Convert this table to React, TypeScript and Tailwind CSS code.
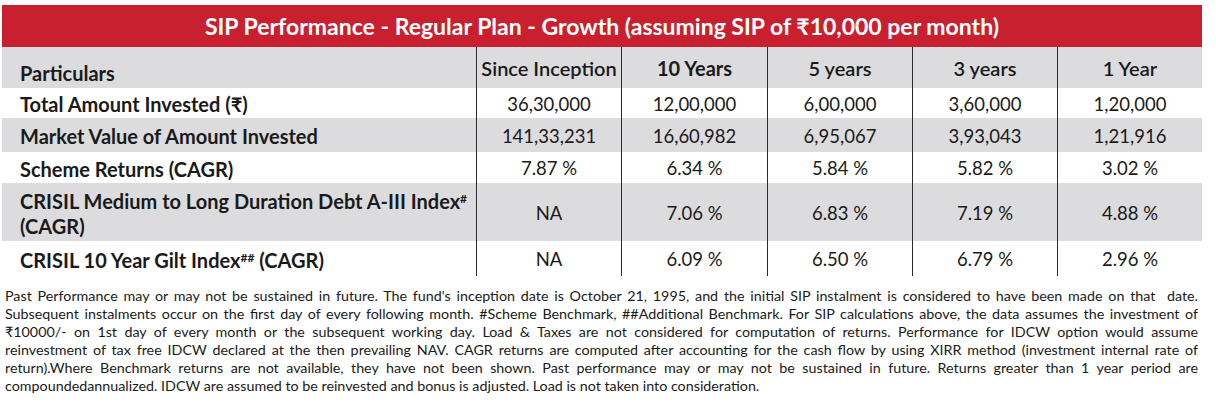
const cols = ['Since Inception', '10 Years', '5 years', '3 years', '1 Year'];

const rows = [
  { label: <>Total Amount Invested (₹)</>, values: ['36,30,000', '12,00,000', '6,00,000', '3,60,000', '1,20,000'], h: 'h-[30px]', bg: 'bg-white' },
  { label: <>Market Value of Amount Invested</>, values: ['141,33,231', '16,60,982', '6,95,067', '3,93,043', '1,21,916'], h: 'h-[34px]', bg: 'bg-[#dcdcde]' },
  { label: <>Scheme Returns (CAGR)</>, values: ['7.87 %', '6.34 %', '5.84 %', '5.82 %', '3.02 %'], h: 'h-[31px]', bg: 'bg-white' },
  {
    label: (
      <>
        CRISIL Medium to Long Duration Debt A-III Index<sup className="text-[12px]">#</sup>
        <br />
        (CAGR)
      </>
    ),
    values: ['NA', '7.06 %', '6.83 %', '7.19 %', '4.88 %'],
    h: 'h-[58px]',
    bg: 'bg-[#dcdcde]',
  },
  {
    label: (
      <>
        CRISIL 10 Year Gilt Index<sup className="text-[12px]">##</sup> (CAGR)
      </>
    ),
    values: ['NA', '6.09 %', '6.50 %', '6.79 %', '2.96 %'],
    h: 'h-[35px]',
    bg: 'bg-white',
  },
];

const notes = [
  "Past Performance may or may not be sustained in future. The fund's inception date is October 21, 1995, and the initial SIP instalment is considered to have been made on that  date.",
  'Subsequent instalments occur on the first day of every following month. #Scheme Benchmark, ##Additional Benchmark. For SIP calculations above, the data assumes the investment of',
  '₹10000/- on 1st day of every month or the subsequent working day. Load & Taxes are not considered for computation of returns. Performance for IDCW option would assume',
  'reinvestment of tax free IDCW declared at the then prevailing NAV. CAGR returns are computed after accounting for the cash flow by using XIRR method (investment internal rate of',
  'return).Where Benchmark returns are not available, they have not been shown. Past performance may or may not be sustained in future. Returns greater than 1 year period are',
];

const grid = 'grid grid-cols-[474px_145px_146px_145px_145px_145px]';

export default function App() {
  return (
    <div className="w-[1216px] h-[405px] bg-white text-[#1a1a1a] font-['Lato','Noto_Sans',sans-serif] overflow-hidden">
      <div className="ml-[2px] mt-[5px] w-[1200px]">
        {/* Title bar */}
        <div className="h-[42px] bg-[#c9202f] flex items-center justify-center text-white text-[23px] font-bold">
          SIP Performance - Regular Plan - Growth (assuming SIP of ₹10,000 per month)
        </div>

        {/* Column headings */}
        <div className={`${grid} h-[41px] bg-[#dcdcde] text-[20px]`}>
          <div className="flex items-center pl-[18px] pt-[10px] font-bold">Particulars</div>
          {cols.map((c, i) => (
            <div
              key={c}
              className={`flex items-center justify-center border-l border-[#2a2a2a] pt-[1px] ${i === 1 ? 'font-bold' : 'font-semibold'}`}
            >
              {c}
            </div>
          ))}
        </div>

        {/* Body */}
        {rows.map((r, idx) => (
          <div key={idx} className={`${grid} ${r.h} ${r.bg} text-[18.5px]`}>
            <div className="flex items-center pl-[18px] pt-[3px] font-bold text-[20px] leading-[25px]">
              <div>{r.label}</div>
            </div>
            {r.values.map((v, i) => (
              <div key={i} className="flex items-center justify-center border-l border-[#2a2a2a] pt-[3px]">
                {v}
              </div>
            ))}
          </div>
        ))}
      </div>

      {/* Footnote */}
      <div className="mt-[11px] ml-[5px] w-[1193px] text-[14.3px] leading-[18px]">
        {notes.map((n, i) => (
          <p key={i} className="text-justify [text-align-last:justify] whitespace-pre-wrap">
            {n}
          </p>
        ))}
        <p>compoundedannualized. IDCW are assumed to be reinvested and bonus is adjusted. Load is not taken into consideration.</p>
      </div>
    </div>
  );
}
